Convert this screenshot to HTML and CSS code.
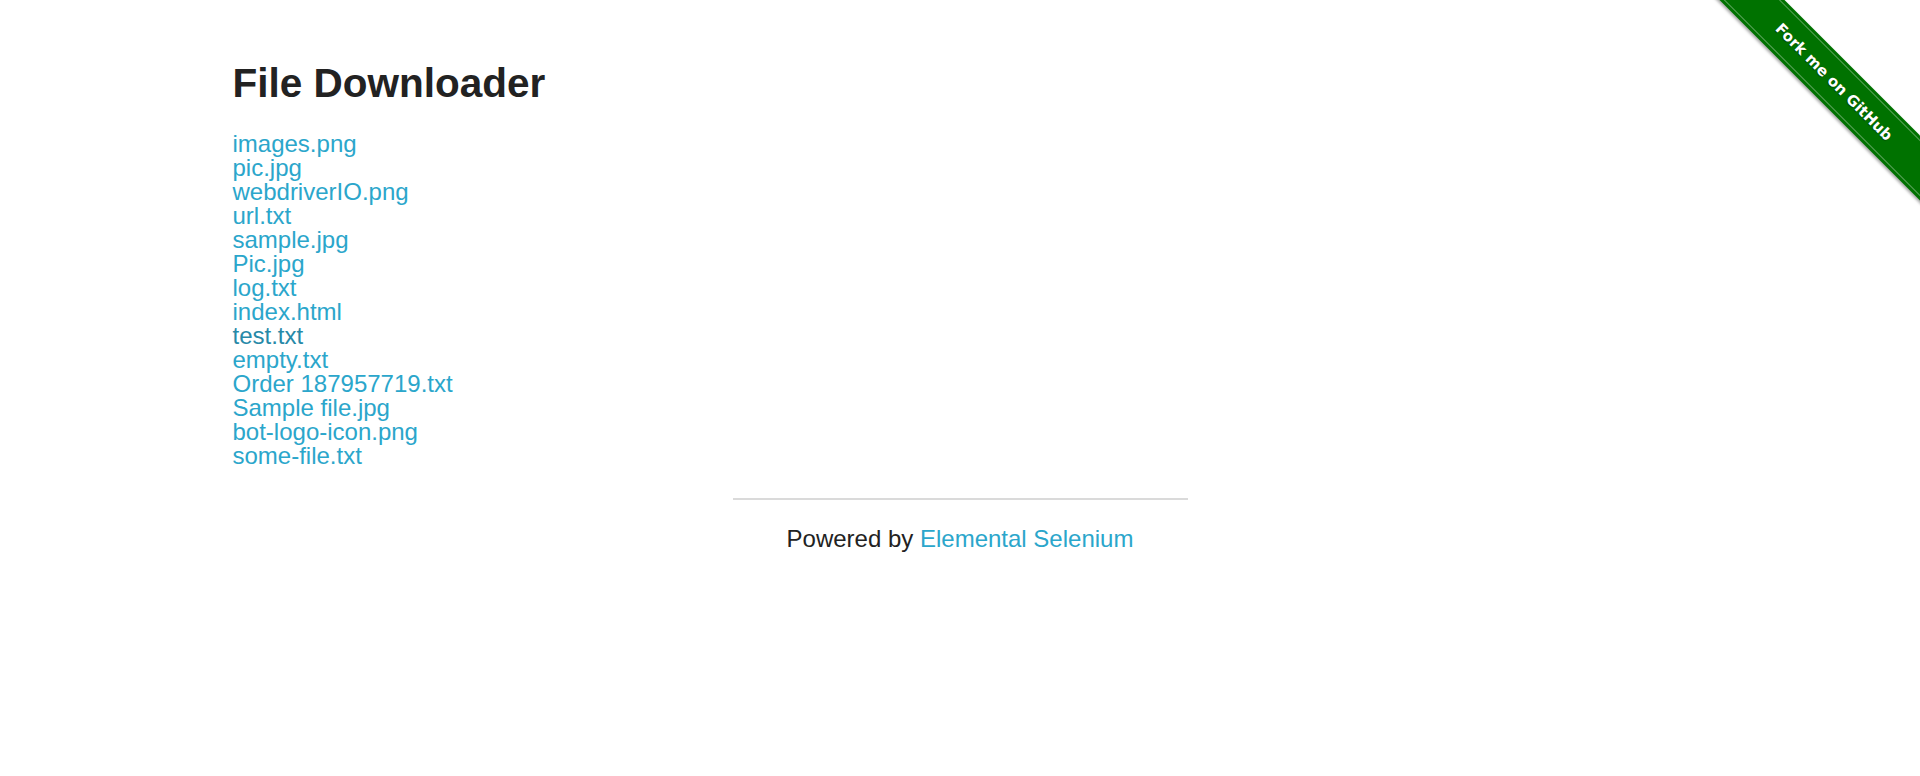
FILE: index.html
```html
<!DOCTYPE html>
<html lang="en">
<head>
<meta charset="utf-8">
<title>The Internet</title>
<link rel="stylesheet" href="styles.css">
</head>
<body>
<a class="forkme" href="#"><span class="ribbon">Fork me on GitHub</span></a>
<div class="row">
  <div class="columns content">
    <div class="example">
      <h3>File Downloader</h3>
      <div class="files">
        <a href="#">images.png</a>
        <a href="#">pic.jpg</a>
        <a href="#">webdriverIO.png</a>
        <a href="#">url.txt</a>
        <a href="#">sample.jpg</a>
        <a href="#">Pic.jpg</a>
        <a href="#">log.txt</a>
        <a href="#">index.html</a>
        <a href="#" class="focused">test.txt</a>
        <a href="#">empty.txt</a>
        <a href="#">Order 187957719.txt</a>
        <a href="#">Sample file.jpg</a>
        <a href="#">bot-logo-icon.png</a>
        <a href="#">some-file.txt</a>
      </div>
    </div>
  </div>
</div>
<div class="row footer">
  <div class="columns footer-col">
    <hr class="rule">
    <div class="powered">Powered by <a href="#">Elemental Selenium</a></div>
  </div>
</div>
</body>
</html>
```

FILE: styles.css
```css
html, body {
  margin: 0;
  padding: 0;
  background: #ffffff;
}
body {
  font-family: "Liberation Sans", Arial, Helvetica, sans-serif;
  color: #222222;
  font-size: 24px;
  line-height: 36px;
}
a {
  color: #2ba6cb;
  text-decoration: none;
}
.row {
  max-width: 1500px;
  margin: 0 auto;
}
.columns {
  padding: 0 22.5px;
}
.example {
  padding-top: 55px;
}
h3 {
  margin: 0 0 20.6px;
  font-size: 40.5px;
  line-height: 56.7px;
  font-weight: bold;
  color: #222222;
}
.files {
  display: flex;
  flex-direction: column;
  align-items: flex-start;
  font-size: 24px;
  line-height: 24px;
}
.files .focused {
  color: #2789a8;
}
.footer-col {
  width: 455px;
  margin: 0 auto;
}
.rule {
  margin: 29.6px 0 0;
  height: 0;
  border: 0;
  border-top: 2px solid #dadada;
}
.powered {
  margin-top: 21px;
  text-align: center;
  line-height: 36px;
}
.forkme {
  position: absolute;
  top: 0;
  right: 0;
  width: 224px;
  height: 224px;
  overflow: hidden;
}
.ribbon {
  position: absolute;
  left: -22px;
  top: 59px;
  width: 320px;
  height: 46px;
  box-sizing: border-box;
  background: #007200;
  color: #ffffff;
  font-family: "DejaVu Sans", "Liberation Sans", sans-serif;
  font-weight: bold;
  font-size: 15px;
  line-height: 46px;
  text-align: center;
  transform: rotate(45deg);
  box-shadow: 0 2px 3px rgba(0, 0, 0, 0.35);
  text-shadow: 0 1px 1px rgba(0, 0, 0, 0.4);
}
.ribbon::before,
.ribbon::after {
  content: "";
  position: absolute;
  left: 0;
  right: 0;
  height: 0;
  border-top: 1px solid rgba(255, 255, 255, 0.35);
}
.ribbon::before {
  top: 3px;
}
.ribbon::after {
  bottom: 3px;
}
```
